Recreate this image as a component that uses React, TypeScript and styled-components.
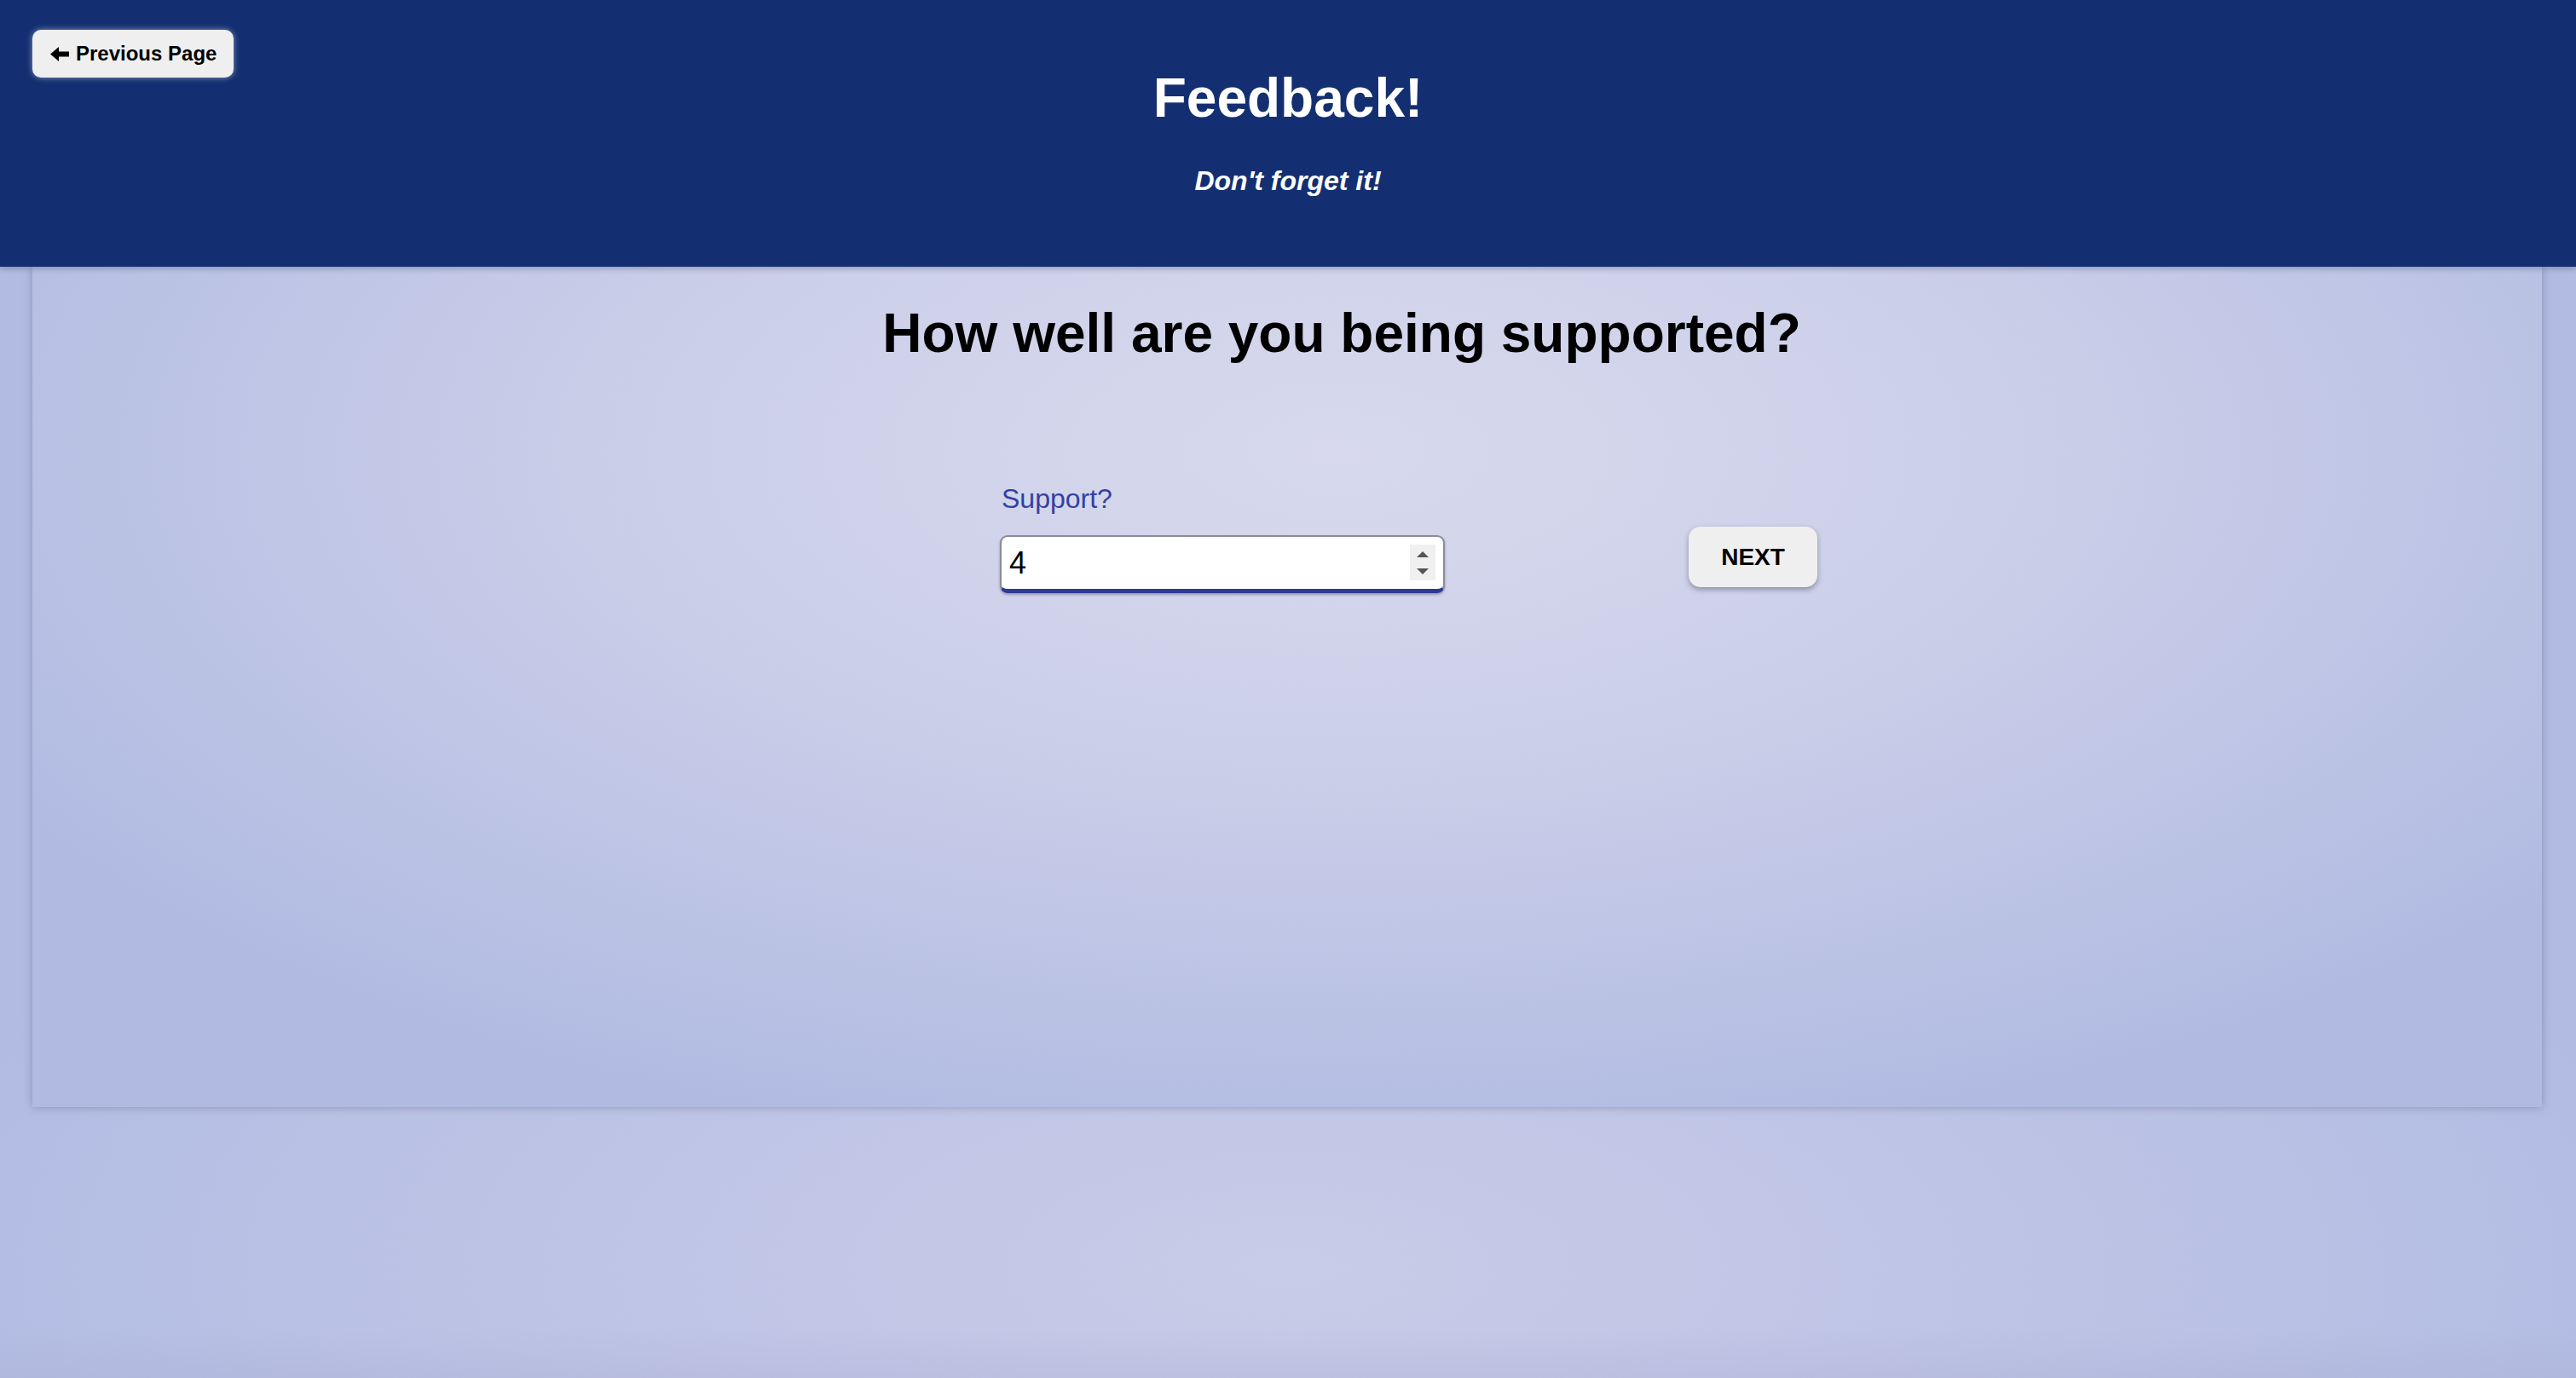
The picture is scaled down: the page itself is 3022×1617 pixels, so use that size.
import React from "react";
import styled, { createGlobalStyle } from "styled-components";

const GlobalStyle = createGlobalStyle`
  html, body {
    margin: 0;
    padding: 0;
    font-family: "Liberation Sans", Arial, Helvetica, sans-serif;
  }
  * { box-sizing: border-box; }
`;

const Page = styled.div`
  min-height: 100vh;
  display: flex;
  flex-direction: column;
  background:
    linear-gradient(to bottom, rgba(150, 152, 195, 0) calc(100% - 60px), rgba(165, 168, 205, 0.25) 100%),
    radial-gradient(ellipse 55% 42% at 50% 92%, rgba(201, 204, 232, 1) 0%, rgba(201, 204, 232, 0) 100%),
    linear-gradient(#b2bce3, #b2bce3);
`;

const Header = styled.header`
  position: relative;
  z-index: 2;
  height: 313px;
  padding-top: 78px;
  display: flex;
  flex-direction: column;
  align-items: center;
  background: #132f71;
  box-shadow: 0 2px 7px rgba(10, 20, 60, 0.3);
`;

const BackButton = styled.button`
  position: absolute;
  left: 38px;
  top: 35px;
  width: 236px;
  height: 56px;
  padding: 0 0 0 21px;
  display: flex;
  align-items: center;
  gap: 8px;
  border: none;
  border-radius: 10px;
  background: #efefef;
  box-shadow: 0 0 7px rgba(255, 255, 255, 0.5);
  font-family: inherit;
  font-size: 24px;
  font-weight: 700;
  color: #000;
  cursor: pointer;
`;

const Title = styled.h1`
  margin: 0;
  font-size: 64px;
  line-height: 74px;
  font-weight: 700;
  color: #fff;
`;

const Subtitle = styled.h3`
  margin: 42px 0 0;
  font-size: 32px;
  line-height: 37px;
  font-weight: 700;
  font-style: italic;
  color: #fff;
`;

const Card = styled.main`
  position: relative;
  z-index: 1;
  height: 986px;
  margin: 0 40px 0 38px;
  display: flex;
  flex-direction: column;
  background: radial-gradient(
    ellipse 62% 85% at 52% 22%,
    #d8d9ed 0%,
    #ccd0e9 40%,
    #b1bbe2 100%
  );
  box-shadow: 0 0 10px rgba(60, 60, 100, 0.35);
`;

const Question = styled.h2`
  margin: 41px 0 0;
  padding-left: 128px;
  text-align: center;
  font-size: 64px;
  line-height: 74px;
  font-weight: 700;
  color: #000;
`;

const Row = styled.div`
  margin-top: 139px;
  padding-left: 285px;
  display: flex;
  justify-content: center;
  align-items: flex-end;
  gap: 286px;
`;

const Field = styled.div`
  display: flex;
  flex-direction: column;
  width: 522px;
`;

const Label = styled.label`
  margin-left: 2px;
  font-size: 32px;
  line-height: 37px;
  color: #3341a0;
`;

const InputWrap = styled.div`
  position: relative;
  margin-top: 24px;
  height: 68px;
`;

const NumberInput = styled.input`
  width: 100%;
  height: 100%;
  padding: 0 50px 0 9px;
  border: 2px solid #8c8c98;
  border-bottom: 5px solid #2e3a94;
  border-radius: 9px;
  background: #fff;
  box-shadow: 0 2px 3px rgba(40, 40, 70, 0.35);
  font-family: inherit;
  font-size: 36px;
  color: #000;
  outline: none;
  -moz-appearance: textfield;
  &::-webkit-inner-spin-button,
  &::-webkit-outer-spin-button {
    -webkit-appearance: none;
    margin: 0;
  }
`;

const Spinner = styled.div`
  position: absolute;
  right: 11px;
  top: 11px;
  width: 30px;
  height: 42px;
  background: #f0f0f0;
  display: flex;
  flex-direction: column;
  align-items: center;
  justify-content: center;
  gap: 13px;
`;

const Tri = styled.span<{ $down?: boolean }>`
  width: 0;
  height: 0;
  border-left: 7px solid transparent;
  border-right: 7px solid transparent;
  ${(p) =>
    p.$down
      ? "border-top: 7px solid #555;"
      : "border-bottom: 7px solid #555;"}
`;

const NextButton = styled.button`
  width: 151px;
  height: 71px;
  margin-bottom: 7px;
  border: none;
  border-radius: 14px;
  background: #efefef;
  box-shadow: 0 3px 6px rgba(40, 40, 70, 0.4);
  font-family: inherit;
  font-size: 28px;
  font-weight: 700;
  color: #000;
  cursor: pointer;
`;

const ArrowIcon = () => (
  <svg width="22" height="17" viewBox="0 0 22 17" aria-hidden="true">
    <polygon points="0,8.5 10,0 10,5.5 22,5.5 22,11.5 10,11.5 10,17" fill="#000" />
  </svg>
);

export default function App() {
  const [value, setValue] = React.useState("4");
  return (
    <>
      <GlobalStyle />
      <Page>
        <Header>
          <BackButton type="button">
            <ArrowIcon />
            Previous Page
          </BackButton>
          <Title>Feedback!</Title>
          <Subtitle>Don't forget it!</Subtitle>
        </Header>
        <Card>
          <Question>How well are you being supported?</Question>
          <Row>
            <Field>
              <Label htmlFor="support">Support?</Label>
              <InputWrap>
                <NumberInput
                  id="support"
                  type="number"
                  value={value}
                  onChange={(e) => setValue(e.target.value)}
                />
                <Spinner>
                  <Tri />
                  <Tri $down />
                </Spinner>
              </InputWrap>
            </Field>
            <NextButton type="button">NEXT</NextButton>
          </Row>
        </Card>
      </Page>
    </>
  );
}
